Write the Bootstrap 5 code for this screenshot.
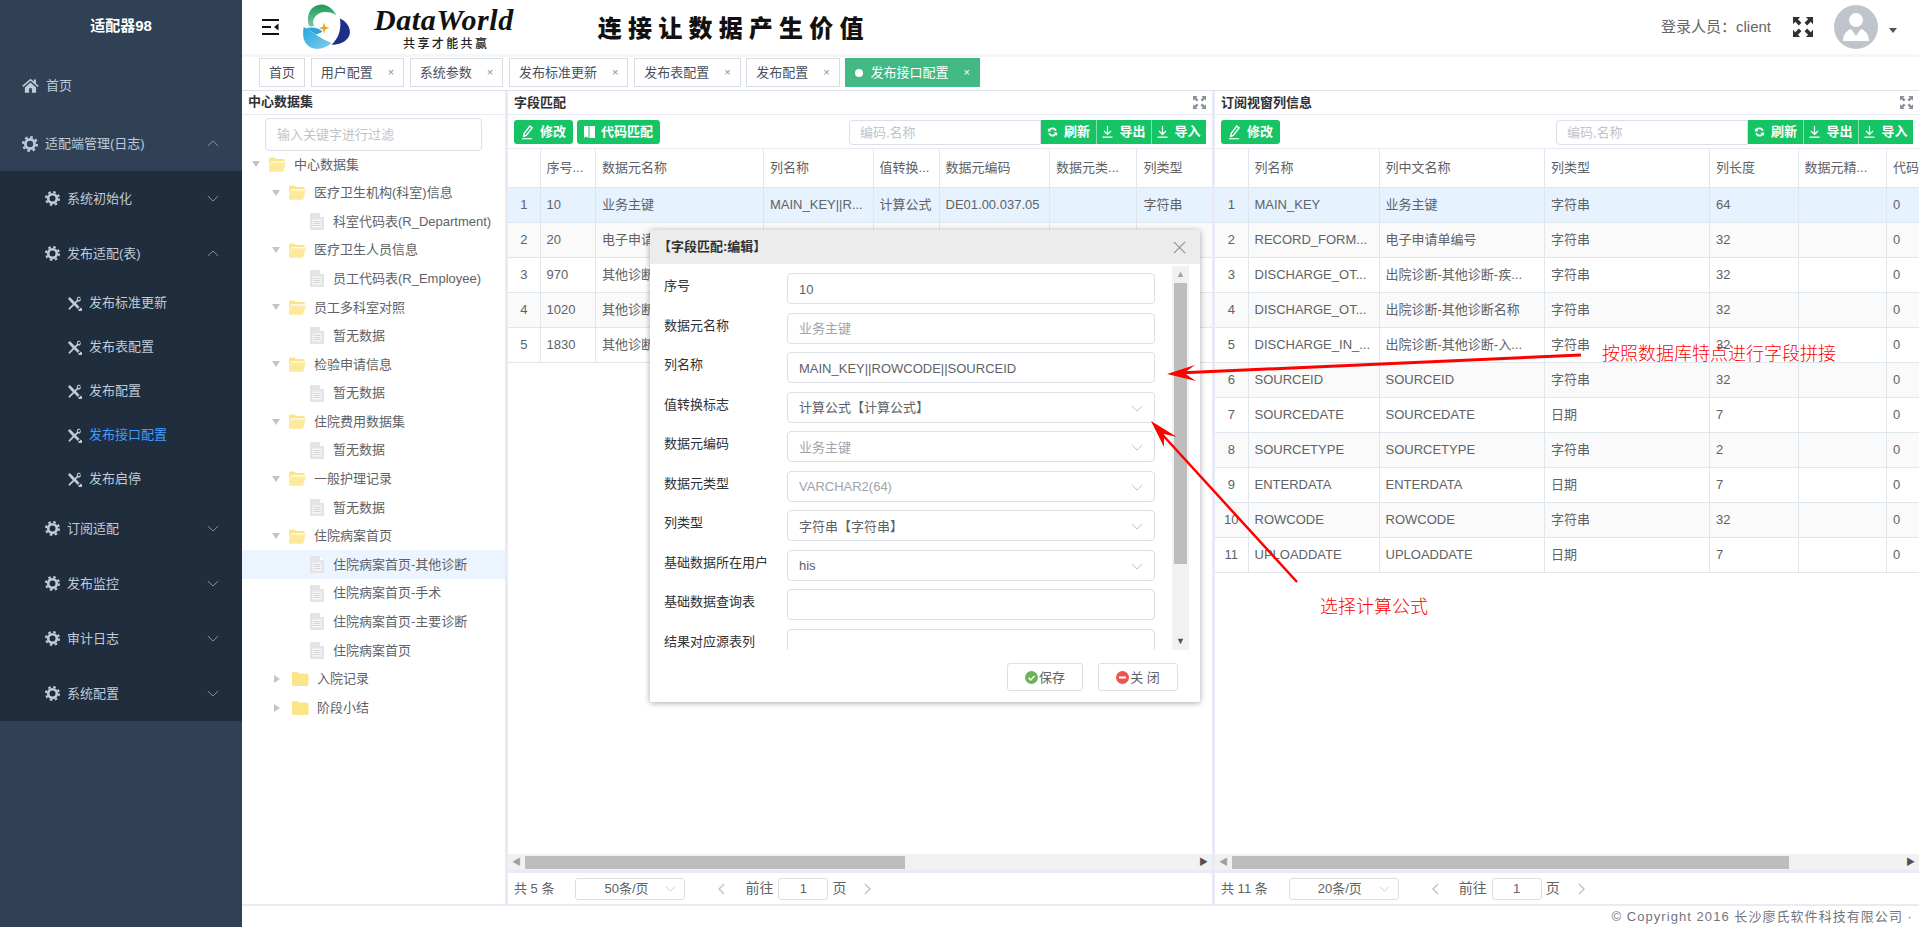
<!DOCTYPE html>
<html lang="zh">
<head>
<meta charset="utf-8">
<title>适配器98</title>
<link rel="stylesheet" href="https://cdn.jsdelivr.net/npm/bootstrap@5.3.0/dist/css/bootstrap.min.css">
<style>
html,body{height:927px;overflow:hidden;margin:0}
body{font-family:"Liberation Sans","Noto Sans CJK SC",sans-serif;font-size:13px;color:#606266;background:#fff;position:relative}
.ico{display:block;flex:none}
.shell{height:927px;width:1919px}
.side{width:242px;flex:none;background:#304156;color:#bfcbd9}
.side-title{height:58px;color:#fff;font-weight:700;font-size:15px;padding-bottom:6px}
.side-item{height:55px;padding-right:23px}
.side-item .gap-label{margin-left:7px}
.lv1{padding-left:22px}
.lv2{padding-left:45px}
.lv3{padding-left:67px;height:44px}
.lv1a{height:58px;padding-top:3px}
.side-sub{background:#1f2d3d}
.side-on{color:#409eff}
.chev{margin-left:auto;color:#8591a2}
.mainbox{width:1677px}
.topbar{height:54px;flex:none;padding:0 22px 0 20px;color:#222}
.brand{font-family:"Liberation Serif",serif;font-style:italic;font-weight:700;font-size:30px;line-height:29px;color:#111;letter-spacing:.6px}
.brand-sub{font-family:"Noto Sans CJK SC",sans-serif;font-size:12px;line-height:13px;letter-spacing:2.4px;color:#222;font-weight:500;margin-top:2px;padding-left:29px}
.slogan{font-family:"Noto Sans CJK SC",sans-serif;font-weight:900;font-size:24px;letter-spacing:6.2px;color:#111;margin-left:84px}
.who{font-size:15px;color:#666;margin-left:auto;margin-right:22px}
.avatar{width:44px;height:44px;border-radius:50%;background:#c0c4cc;margin-left:21px;overflow:hidden}
.ddcaret{width:0;height:0;border:4px solid transparent;border-top:5px solid #555;border-bottom:0;margin-left:11px;margin-top:6px}
.tabbar{height:37px;flex:none;background:#fff;border-top:3px solid #f6f6f6;border-bottom:1px solid #dde1ee;padding:1px 0 0 17px;gap:5.7px;box-shadow:0 1px 0 #eef0f7}
.tabx{height:29px;border:1px solid #d8dce5;color:#495060;padding:0 9px;gap:15px;line-height:1;background:#fff}
.tabx i{font-style:normal;font-size:11px;color:#8a8f99}
.tabx-on{background:#42b983;border-color:#42b983;color:#fff}
.tabx-on i{color:#fff}
.dot{width:8px;height:8px;background:#fff;border-radius:50%;margin-right:-8px}
.work{height:815px;flex:none;background:#e8ebf5;gap:3px;border-bottom:2px solid #e8ebf5}
.pane{background:#fff;min-width:0;height:813px}
.pane-tree{width:263px;flex:none}
.pane-mid{width:704px;flex:none}
.pane-right{width:704px;flex:none}
.pane-title{height:24px;flex:none;border-bottom:1px solid #e8ebf5;font-weight:700;color:#303133;padding:0 6px;line-height:22px}
.pane-tree .pane-title{padding-left:6px}
.tool{height:34px;flex:none;border-bottom:1px solid #e8ebf5;padding:5px 6px 0 6px;align-items:flex-start}
.gbtn{background:#16c466;color:#fff;border:0;border-radius:3px;height:24px;padding:0;font-size:13px;font-weight:700;line-height:24px;gap:6px}
.gbtn:hover{background:#16c466;color:#fff}
.b-edit{width:59px;margin-right:4px}
.b-code{width:83px}
.findbox{width:192px;height:25px;border:1px solid #dcdfe6;border-radius:4px 0 0 4px;margin-left:auto;padding:0 10px;font-size:13px;outline:0;color:#606266}
.findbox::placeholder,.treefind::placeholder{color:#c0c4cc}
.gbtns{height:24px;background:#16c466;border-radius:0 3px 3px 0}
.gbtns .gbtn{border-radius:0;width:55px;border-left:1px solid #7fe0ad}
.gbtns .gbtn:first-child{border-left:0}
.gridbox{flex:1 1 auto;min-height:0;overflow:hidden}
.dtbl.table{table-layout:fixed;margin:0;border-collapse:collapse;font-size:13px}
.mtbl.table{width:770px}
.rtbl.table{width:772px}
.dtbl.table>:not(caption)>*>*{padding:0 6px;border:1px solid #dfe6ec;border-top:0;border-left:0;white-space:nowrap;overflow:hidden;color:#606266;background:#fff;box-shadow:none;vertical-align:middle;height:35px;font-weight:400}
.dtbl.table>thead>tr>th{height:38px}
.dtbl.table>tbody>tr:nth-child(even)>td{background:#fafafa}
.dtbl.table>tbody>tr.hit>td{background:#e6f3ff}
.dtbl.table>:not(caption)>*>*.rn{text-align:center;padding:0}
.cm0{width:32px}.cm1{width:55.5px}.cm2{width:168px}.cm3{width:109.5px}.cm4{width:66px}.cm5{width:110.6px}.cm6{width:87.4px}.cm7{width:141px}
.cr0{width:33px}.cr1{width:131px}.cr2{width:165.5px}.cr3{width:165px}.cr4{width:88.5px}.cr5{width:88.5px}.cr6{width:100px}
.hbar{height:16px;flex:none;background:#f1f1f1;padding:2px 0 1px}
.hbar .arrow-l,.hbar .arrow-r{width:17px;flex:none;color:#a0a0a0;font-size:9px;line-height:13px;text-align:center}
.hbar .arrow-r{color:#505050}
.thumb{background:#bdbdbd;height:13px}
.pagerow{height:34px;flex:none;border-top:3px solid #e8ebf5;padding:0 6px;color:#606266}
.pagesel{width:110px;height:22px;border:1px solid #dcdfe6;border-radius:3px;margin-left:21px;padding:0 8px 0 28px;justify-content:space-between}
.pagego{color:#c0c4cc;font-size:0;margin-left:33px;margin-right:20px}
.pagenum{width:50px;height:22px;border:1px solid #dcdfe6;border-radius:3px;margin:0 4px 0 5px;text-align:center}
.pagenext{color:#c0c4cc;margin-left:18px}
.pglab{font-size:14px}
.treefind{width:217px;height:33px;border:1px solid #dcdfe6;border-radius:4px;margin:3px 0 -1px 23px;padding:0 11px;font-size:13px;outline:0;flex:none;color:#606266}
.treerow{height:28.6px;color:#606266;white-space:nowrap}
.t0{padding-left:10px}.t1{padding-left:30px}.t2{padding-left:68px}
.tcaret{width:0;height:0;border:4.5px solid transparent;border-top:6px solid #c0c4cc;border-bottom:0;margin-right:9px;flex:none}
.tcaret-r{border:4.5px solid transparent;border-left:6px solid #c0c4cc;border-right:0;margin-right:12px;margin-left:2px}
.treerow .tlabel{margin-left:8px}
.t2 .tlabel{margin-left:9px}
.treehit{background:#ecf5ff}
.foot{height:21px;flex:none;padding-right:6px;color:#6f7680;font-size:13px;letter-spacing:1.05px;font-weight:400;background:#fff}
.dlg{position:absolute;left:650px;top:230px;width:550px;height:472px;background:#fff;box-shadow:0 1px 6px rgba(0,0,0,.35);border-radius:2px;z-index:5}
.dlg-head{height:34px;flex:none;background:#ececec;padding:0 14px;font-weight:700;color:#303133}
.dlg-head span{margin-left:-6px}
.dlg-close{margin-left:auto;color:#8f9298}
.dlg-main{height:386px;flex:none;padding-left:14px}
.dlg-form{width:505px;padding-top:9px;overflow:hidden}
.frow{height:39.5px;flex:none}
.flabel{width:123px;flex:none;color:#303133;padding-top:5px;line-height:16px;white-space:nowrap}
.fctl.form-control{width:368px;height:31px;padding:2px 11px 0;font-size:13px;border-color:#dcdfe6;border-radius:4px;color:#606266;box-shadow:none;background:#fff}
.fctl.muted{color:#a0a3a9}
.fctl .chv{color:#c0c4cc;margin-left:auto}
.vbar{width:17px;flex:none;margin-left:3px;background:#f1f1f1;padding:0 2px;height:384px;margin-top:2px}
.vbar .va{height:17px;color:#a0a0a0;font-size:9px;line-height:17px;text-align:center}
.vbar .vb{color:#505050}
.vthumb{background:#bdbdbd;height:281px}
.dlg-foot{flex:1 1 auto;padding:13px 22px 0 0;justify-content:flex-end;gap:15px}
.dbtn{height:28px;border:1px solid #dcdfe6;border-radius:3px;background:#fff;color:#606266;font-size:13px;padding:0;gap:1px;line-height:1}
.dbtn-s{width:76px}.dbtn-c{width:80px}
.marks{position:absolute;left:0;top:0;z-index:6;pointer-events:none}
.redtxt{position:absolute;color:#f00;font-size:18px;line-height:22px;z-index:6;font-family:"Noto Sans CJK SC",sans-serif;font-weight:300;white-space:nowrap}
.rt1{left:1602px;top:341px}
.rt2{left:1320px;top:594px}
.darkico{color:#303133}
.softico{color:#8a8f99}
.softchev{color:#c0c4cc}
</style>
</head>
<body>
<svg width="0" height="0" class="position-absolute">
<defs>
<symbol id="i-gear" viewBox="0 0 16 16"><circle cx="8" cy="8" r="4.6" fill="none" stroke="currentColor" stroke-width="2.8"/><circle cx="8" cy="8" r="6.9" fill="none" stroke="currentColor" stroke-width="2.2" stroke-dasharray="2.7 2.72"/></symbol>
<symbol id="i-tools" viewBox="0 0 16 16"><path d="M1 3 3 1l4.2 4.3 7 7.2a2 2 0 1 1-2 2L5 7.4z" fill="currentColor"/><circle cx="13" cy="13" r="1" fill="#1f2d3d"/><path d="M14.8 1.2c-1.6-.9-3.500-.4-4.200 1-.3.7-.3 1.400 0 2L1.500 13.400l1.100 1.400 9-9c1 .3 2 0 2.700-.8.6-.8.700-1.800.3-2.600L12.800 4.500 11.600 4l-.2-1.300z" fill="currentColor"/></symbol>
<symbol id="i-home" viewBox="0 0 18 16"><path d="M9 .8.2 8.300l1.100 1.200L9 3l7.700 6.500 1.100-1.200-3-2.500V1.500h-2.300v2.300zM3 10v5.600h4.500V11h3v4.600H15V10L9 4.800z" fill="currentColor"/></symbol>
<symbol id="i-up" viewBox="0 0 12 7"><path d="M.8 6 6 1l5.200 5" fill="none" stroke="currentColor" stroke-width="1"/></symbol>
<symbol id="i-down" viewBox="0 0 12 7"><path d="M.8 1 6 6l5.200-5" fill="none" stroke="currentColor" stroke-width="1"/></symbol>
<symbol id="i-folder" viewBox="0 0 17 15"><path d="M0 2.500C0 1.500.6 1 1.500 1h4l1.500 1.500h8c.8 0 1.500.5 1.500 1.500v9.500c0 .8-.6 1.500-1.500 1.500h-13.500C.6 15 0 14.300 0 13.500z" fill="#fce588"/></symbol>
<symbol id="i-folderopen" viewBox="0 0 17 15"><path d="M0 2C0 1 .6.500 1.500.500h4L7 2h7.500c.8 0 1.200.4 1.200 1.200V4H2.500L0 9z" fill="#fce588"/><path d="M2.900 4.800H17l-2.500 8.700c-.2.800-.8 1.300-1.500 1.300H1.200C.5 14.800 0 14.300 0 13.500V10z" fill="#fde99a"/><path d="M3.800 5.800h12" stroke="#fff" stroke-width=".9" stroke-dasharray="1 .6"/></symbol>
<symbol id="i-file" viewBox="0 0 14 17"><path d="M0 1C0 .4.400 0 1 0h9l4 4v12c0 .6-.4 1-1 1H1c-.6 0-1-.4-1-1z" fill="#e3e4e6"/><path d="M10 0v4h4z" fill="#fff"/><path d="M2.500 6.500h9v8h-9z" fill="#f7f7f8"/><path d="M3.500 8.500h7M3.500 10.500h7M3.500 12.500h7" stroke="#c9cacd" stroke-width=".8"/></symbol>
<symbol id="i-expand" viewBox="0 0 14 14"><path d="M0 0h5L3.400 1.600 5.900 4.100 4.100 5.900 1.600 3.400 0 5zM14 0v5l-1.600-1.600-2.500 2.500-1.800-1.800 2.500-2.500L9 0zM0 14V9l1.600 1.600 2.500-2.500 1.800 1.800-2.500 2.500L5 14zM14 14H9l1.600-1.600-2.500-2.500 1.800-1.800 2.500 2.500L14 9z" fill="currentColor"/></symbol>
<symbol id="i-pen" viewBox="0 0 14 16"><path d="M9.500 1 12 3 5.600 11.200 3 12.300l.2-2.900z" fill="none" stroke="currentColor" stroke-width="1.500"/><path d="M1 14.700h11" stroke="currentColor" stroke-width="1.200"/></symbol>
<symbol id="i-book" viewBox="0 0 11 13"><path d="M0 0h4.500v12l-2.200-1.500L0 12zM5.500 0H11v12H5.500z" fill="currentColor"/></symbol>
<symbol id="i-refresh" viewBox="0 0 12 13"><path d="M10.500 4.800A5 5 0 0 0 2 3.400L1 2v4h4L3.400 4.800a3.200 3.200 0 0 1 5.400.6zM1.500 8.200A5 5 0 0 0 10 9.600l1 1.400V7H7l1.600 1.200a3.200 3.200 0 0 1-5.400-.6z" fill="currentColor"/></symbol>
<symbol id="i-dl" viewBox="0 0 11 12"><path d="M5.500 0v7.800M2 5l3.500 3.500L9 5M.5 11.200h10" fill="none" stroke="currentColor" stroke-width="1.200"/></symbol>
<symbol id="i-x" viewBox="0 0 14 14"><path d="M1 1l12 12M13 1 1 13" fill="none" stroke="currentColor" stroke-width="1.300"/></symbol>
</defs>
</svg>

<div class="shell d-flex">
  <aside class="side d-flex flex-column">
    <div class="side-title d-flex align-items-center justify-content-center">适配器98</div>
    <div class="side-item lv1 d-flex align-items-center"><svg class="ico" width="17" height="15"><use href="#i-home"/></svg><span class="gap-label">首页</span></div>
    <div class="side-item lv1 lv1a d-flex align-items-center"><svg class="ico" width="16" height="16"><use href="#i-gear"/></svg><span class="gap-label">适配端管理(日志)</span><svg class="ico chev" width="12" height="7"><use href="#i-up"/></svg></div>
    <div class="side-sub d-flex flex-column">
      <div class="side-item lv2 d-flex align-items-center"><svg class="ico" width="15" height="15"><use href="#i-gear"/></svg><span class="gap-label">系统初始化</span><svg class="ico chev" width="12" height="7"><use href="#i-down"/></svg></div>
      <div class="side-item lv2 d-flex align-items-center"><svg class="ico" width="15" height="15"><use href="#i-gear"/></svg><span class="gap-label">发布适配(表)</span><svg class="ico chev" width="12" height="7"><use href="#i-up"/></svg></div>
      <div class="side-item lv3 d-flex align-items-center"><svg class="ico" width="15" height="15"><use href="#i-tools"/></svg><span class="gap-label">发布标准更新</span></div>
      <div class="side-item lv3 d-flex align-items-center"><svg class="ico" width="15" height="15"><use href="#i-tools"/></svg><span class="gap-label">发布表配置</span></div>
      <div class="side-item lv3 d-flex align-items-center"><svg class="ico" width="15" height="15"><use href="#i-tools"/></svg><span class="gap-label">发布配置</span></div>
      <div class="side-item lv3 d-flex align-items-center"><svg class="ico" width="15" height="15"><use href="#i-tools"/></svg><span class="gap-label side-on">发布接口配置</span></div>
      <div class="side-item lv3 d-flex align-items-center"><svg class="ico" width="15" height="15"><use href="#i-tools"/></svg><span class="gap-label">发布启停</span></div>
      <div class="side-item lv2 d-flex align-items-center"><svg class="ico" width="15" height="15"><use href="#i-gear"/></svg><span class="gap-label">订阅适配</span><svg class="ico chev" width="12" height="7"><use href="#i-down"/></svg></div>
      <div class="side-item lv2 d-flex align-items-center"><svg class="ico" width="15" height="15"><use href="#i-gear"/></svg><span class="gap-label">发布监控</span><svg class="ico chev" width="12" height="7"><use href="#i-down"/></svg></div>
      <div class="side-item lv2 d-flex align-items-center"><svg class="ico" width="15" height="15"><use href="#i-gear"/></svg><span class="gap-label">审计日志</span><svg class="ico chev" width="12" height="7"><use href="#i-down"/></svg></div>
      <div class="side-item lv2 d-flex align-items-center"><svg class="ico" width="15" height="15"><use href="#i-gear"/></svg><span class="gap-label">系统配置</span><svg class="ico chev" width="12" height="7"><use href="#i-down"/></svg></div>
    </div>
  </aside>

  <div class="mainbox d-flex flex-column">
    <header class="topbar d-flex align-items-center">
      <svg class="ico" width="17" height="16" viewBox="0 0 17 16"><path d="M0 1h17M0 8h9M0 15h17" stroke="#111" stroke-width="2"/><path d="M16.500 4.500v7L12 8z" fill="#111"/></svg>
      <svg class="ico ms-4" width="47" height="46" viewBox="195 8 140 134">
        <defs>
          <linearGradient id="lgG" x1="0" y1="0" x2="0" y2="1"><stop offset="0" stop-color="#1d9a5b"/><stop offset="1" stop-color="#7ec8a0"/></linearGradient>
          <linearGradient id="lgB" x1="0" y1="0" x2="1" y2="1"><stop offset="0" stop-color="#27a5df"/><stop offset="1" stop-color="#7fd0ee"/></linearGradient>
        </defs>
        <path d="M213 72C203 38 218 10 250 8c20 0 35 15 45 32-24-14-52-13-65 6-6 9-7 17-2 25-5 3-11 3-15 1z" fill="url(#lgG)"/>
        <path d="M197 75c18 8 40 30 83 48-20 18-55 27-75 3-11-15-11-33-8-51z" fill="url(#lgB)"/>
        <path d="M205 78c20-4 38 0 48 10-5 5-12 8-20 9-10-6-20-12-28-19z" fill="#2ba6de"/>
        <path d="M305 50c20 8 35 30 28 50-8 20-33 28-53 28 20-18 30-43 25-78z" fill="#1f2f86"/>
        <path d="M258 62l4 12 12 4-12 4-4 12-4-12-12-4 12-4z" fill="#f2a31d"/>
      </svg>
      <div class="ms-4">
        <div class="brand">DataWorld</div>
        <div class="brand-sub">共享才能共赢</div>
      </div>
      <div class="slogan">连接让数据产生价值</div>
      <div class="who">登录人员：client</div>
      <svg class="ico darkico" width="20" height="20"><use href="#i-expand"/></svg>
      <div class="avatar d-flex align-items-end justify-content-center">
        <svg class="ico" width="44" height="44" viewBox="0 0 44 44"><circle cx="22" cy="15" r="7" fill="#fff"/><path d="M9 36c0-6 3-10 8-12l5 7 5-7c5 2 8 6 8 12z" fill="#fff"/></svg>
      </div>
      <div class="ddcaret"></div>
    </header>
    <nav class="tabbar d-flex align-items-start">
      <div class="tabx d-flex align-items-center">首页</div>
      <div class="tabx d-flex align-items-center">用户配置<i>×</i></div>
      <div class="tabx d-flex align-items-center">系统参数<i>×</i></div>
      <div class="tabx d-flex align-items-center">发布标准更新<i>×</i></div>
      <div class="tabx d-flex align-items-center">发布表配置<i>×</i></div>
      <div class="tabx d-flex align-items-center">发布配置<i>×</i></div>
      <div class="tabx tabx-on d-flex align-items-center"><span class="dot"></span>发布接口配置<i>×</i></div>
    </nav>

    <div class="work d-flex">
      <section class="pane pane-tree d-flex flex-column">
        <div class="pane-title">中心数据集</div>
        <input class="treefind" placeholder="输入关键字进行过滤">
        <div class="d-flex flex-column">
          <div class="treerow t0 d-flex align-items-center"><span class="tcaret"></span><svg class="ico" width="17" height="15"><use href="#i-folderopen"/></svg><span class="tlabel">中心数据集</span></div>
          <div class="treerow t1 d-flex align-items-center"><span class="tcaret"></span><svg class="ico" width="17" height="15"><use href="#i-folderopen"/></svg><span class="tlabel">医疗卫生机构(科室)信息</span></div>
          <div class="treerow t2 d-flex align-items-center"><svg class="ico" width="14" height="17"><use href="#i-file"/></svg><span class="tlabel">科室代码表(R_Department)</span></div>
          <div class="treerow t1 d-flex align-items-center"><span class="tcaret"></span><svg class="ico" width="17" height="15"><use href="#i-folderopen"/></svg><span class="tlabel">医疗卫生人员信息</span></div>
          <div class="treerow t2 d-flex align-items-center"><svg class="ico" width="14" height="17"><use href="#i-file"/></svg><span class="tlabel">员工代码表(R_Employee)</span></div>
          <div class="treerow t1 d-flex align-items-center"><span class="tcaret"></span><svg class="ico" width="17" height="15"><use href="#i-folderopen"/></svg><span class="tlabel">员工多科室对照</span></div>
          <div class="treerow t2 d-flex align-items-center"><svg class="ico" width="14" height="17"><use href="#i-file"/></svg><span class="tlabel">暂无数据</span></div>
          <div class="treerow t1 d-flex align-items-center"><span class="tcaret"></span><svg class="ico" width="17" height="15"><use href="#i-folderopen"/></svg><span class="tlabel">检验申请信息</span></div>
          <div class="treerow t2 d-flex align-items-center"><svg class="ico" width="14" height="17"><use href="#i-file"/></svg><span class="tlabel">暂无数据</span></div>
          <div class="treerow t1 d-flex align-items-center"><span class="tcaret"></span><svg class="ico" width="17" height="15"><use href="#i-folderopen"/></svg><span class="tlabel">住院费用数据集</span></div>
          <div class="treerow t2 d-flex align-items-center"><svg class="ico" width="14" height="17"><use href="#i-file"/></svg><span class="tlabel">暂无数据</span></div>
          <div class="treerow t1 d-flex align-items-center"><span class="tcaret"></span><svg class="ico" width="17" height="15"><use href="#i-folderopen"/></svg><span class="tlabel">一般护理记录</span></div>
          <div class="treerow t2 d-flex align-items-center"><svg class="ico" width="14" height="17"><use href="#i-file"/></svg><span class="tlabel">暂无数据</span></div>
          <div class="treerow t1 d-flex align-items-center"><span class="tcaret"></span><svg class="ico" width="17" height="15"><use href="#i-folderopen"/></svg><span class="tlabel">住院病案首页</span></div>
          <div class="treerow t2 treehit d-flex align-items-center"><svg class="ico" width="14" height="17"><use href="#i-file"/></svg><span class="tlabel">住院病案首页-其他诊断</span></div>
          <div class="treerow t2 d-flex align-items-center"><svg class="ico" width="14" height="17"><use href="#i-file"/></svg><span class="tlabel">住院病案首页-手术</span></div>
          <div class="treerow t2 d-flex align-items-center"><svg class="ico" width="14" height="17"><use href="#i-file"/></svg><span class="tlabel">住院病案首页-主要诊断</span></div>
          <div class="treerow t2 d-flex align-items-center"><svg class="ico" width="14" height="17"><use href="#i-file"/></svg><span class="tlabel">住院病案首页</span></div>
          <div class="treerow t1 d-flex align-items-center"><span class="tcaret tcaret-r"></span><svg class="ico" width="17" height="15"><use href="#i-folder"/></svg><span class="tlabel">入院记录</span></div>
          <div class="treerow t1 d-flex align-items-center"><span class="tcaret tcaret-r"></span><svg class="ico" width="17" height="15"><use href="#i-folder"/></svg><span class="tlabel">阶段小结</span></div>
        </div>
      </section>

      <section class="pane pane-mid d-flex flex-column">
        <div class="pane-title d-flex justify-content-between align-items-center"><span>字段匹配</span><svg class="ico softico" width="13" height="13"><use href="#i-expand"/></svg></div>
        <div class="tool d-flex">
          <button class="btn gbtn b-edit d-flex align-items-center justify-content-center"><svg class="ico" width="13" height="15"><use href="#i-pen"/></svg>修改</button>
          <button class="btn gbtn b-code d-flex align-items-center justify-content-center"><svg class="ico" width="11" height="13"><use href="#i-book"/></svg>代码匹配</button>
          <input class="findbox" placeholder="编码,名称">
          <div class="gbtns d-flex">
            <button class="btn gbtn d-flex align-items-center justify-content-center"><svg class="ico" width="11" height="12"><use href="#i-refresh"/></svg>刷新</button>
            <button class="btn gbtn d-flex align-items-center justify-content-center"><svg class="ico" width="11" height="12"><use href="#i-dl"/></svg>导出</button>
            <button class="btn gbtn d-flex align-items-center justify-content-center"><svg class="ico" width="11" height="12"><use href="#i-dl"/></svg>导入</button>
          </div>
        </div>
        <div class="gridbox">
          <table class="table dtbl mtbl">
            <colgroup><col class="cm0"><col class="cm1"><col class="cm2"><col class="cm3"><col class="cm4"><col class="cm5"><col class="cm6"><col class="cm7"></colgroup>
            <thead><tr><th></th><th>序号...</th><th>数据元名称</th><th>列名称</th><th>值转换...</th><th>数据元编码</th><th>数据元类...</th><th>列类型</th></tr></thead>
            <tbody>
              <tr class="hit"><td class="rn">1</td><td>10</td><td>业务主键</td><td>MAIN_KEY||R...</td><td>计算公式</td><td>DE01.00.037.05</td><td></td><td>字符串</td></tr>
              <tr><td class="rn">2</td><td>20</td><td>电子申请单编号</td><td></td><td></td><td></td><td></td><td></td></tr>
              <tr><td class="rn">3</td><td>970</td><td>其他诊断编码</td><td></td><td></td><td></td><td></td><td></td></tr>
              <tr><td class="rn">4</td><td>1020</td><td>其他诊断名称</td><td></td><td></td><td></td><td></td><td></td></tr>
              <tr><td class="rn">5</td><td>1830</td><td>其他诊断入院</td><td></td><td></td><td></td><td></td><td></td></tr>
            </tbody>
          </table>
        </div>
        <div class="hbar d-flex"><span class="arrow-l">◀</span><div class="thumb" style="width:380px"></div><span class="arrow-r ms-auto">▶</span></div>
        <div class="pagerow d-flex align-items-center">
          <span>共 5 条</span>
          <div class="pagesel d-flex align-items-center"><span>50条/页</span><svg class="ico softchev" width="11" height="6"><use href="#i-down"/></svg></div>
          <svg class="ico pagego" width="7" height="12" viewBox="0 0 7 12"><path d="M6 1 1 6l5 5" fill="none" stroke="currentColor" stroke-width="1.500"/></svg>
          <span class="pglab">前往</span><span class="pagenum d-flex align-items-center justify-content-center">1</span><span class="pglab">页</span>
          <svg class="ico pagenext" width="7" height="12" viewBox="0 0 7 12"><path d="m1 1 5 5-5 5" fill="none" stroke="currentColor" stroke-width="1.500"/></svg>
        </div>
      </section>

      <section class="pane pane-right d-flex flex-column">
        <div class="pane-title d-flex justify-content-between align-items-center"><span>订阅视窗列信息</span><svg class="ico softico" width="13" height="13"><use href="#i-expand"/></svg></div>
        <div class="tool d-flex">
          <button class="btn gbtn b-edit d-flex align-items-center justify-content-center"><svg class="ico" width="13" height="15"><use href="#i-pen"/></svg>修改</button>
          <input class="findbox" placeholder="编码,名称">
          <div class="gbtns d-flex">
            <button class="btn gbtn d-flex align-items-center justify-content-center"><svg class="ico" width="11" height="12"><use href="#i-refresh"/></svg>刷新</button>
            <button class="btn gbtn d-flex align-items-center justify-content-center"><svg class="ico" width="11" height="12"><use href="#i-dl"/></svg>导出</button>
            <button class="btn gbtn d-flex align-items-center justify-content-center"><svg class="ico" width="11" height="12"><use href="#i-dl"/></svg>导入</button>
          </div>
        </div>
        <div class="gridbox">
          <table class="table dtbl rtbl">
            <colgroup><col class="cr0"><col class="cr1"><col class="cr2"><col class="cr3"><col class="cr4"><col class="cr5"><col class="cr6"></colgroup>
            <thead><tr><th></th><th>列名称</th><th>列中文名称</th><th>列类型</th><th>列长度</th><th>数据元精...</th><th>代码</th></tr></thead>
            <tbody>
              <tr class="hit"><td class="rn">1</td><td>MAIN_KEY</td><td>业务主键</td><td>字符串</td><td>64</td><td></td><td>0</td></tr>
              <tr><td class="rn">2</td><td>RECORD_FORM...</td><td>电子申请单编号</td><td>字符串</td><td>32</td><td></td><td>0</td></tr>
              <tr><td class="rn">3</td><td>DISCHARGE_OT...</td><td>出院诊断-其他诊断-疾...</td><td>字符串</td><td>32</td><td></td><td>0</td></tr>
              <tr><td class="rn">4</td><td>DISCHARGE_OT...</td><td>出院诊断-其他诊断名称</td><td>字符串</td><td>32</td><td></td><td>0</td></tr>
              <tr><td class="rn">5</td><td>DISCHARGE_IN_...</td><td>出院诊断-其他诊断-入...</td><td>字符串</td><td>32</td><td></td><td>0</td></tr>
              <tr><td class="rn">6</td><td>SOURCEID</td><td>SOURCEID</td><td>字符串</td><td>32</td><td></td><td>0</td></tr>
              <tr><td class="rn">7</td><td>SOURCEDATE</td><td>SOURCEDATE</td><td>日期</td><td>7</td><td></td><td>0</td></tr>
              <tr><td class="rn">8</td><td>SOURCETYPE</td><td>SOURCETYPE</td><td>字符串</td><td>2</td><td></td><td>0</td></tr>
              <tr><td class="rn">9</td><td>ENTERDATA</td><td>ENTERDATA</td><td>日期</td><td>7</td><td></td><td>0</td></tr>
              <tr><td class="rn">10</td><td>ROWCODE</td><td>ROWCODE</td><td>字符串</td><td>32</td><td></td><td>0</td></tr>
              <tr><td class="rn">11</td><td>UPLOADDATE</td><td>UPLOADDATE</td><td>日期</td><td>7</td><td></td><td>0</td></tr>
            </tbody>
          </table>
        </div>
        <div class="hbar d-flex"><span class="arrow-l">◀</span><div class="thumb" style="width:557px"></div><span class="arrow-r ms-auto">▶</span></div>
        <div class="pagerow d-flex align-items-center">
          <span>共 11 条</span>
          <div class="pagesel d-flex align-items-center"><span>20条/页</span><svg class="ico softchev" width="11" height="6"><use href="#i-down"/></svg></div>
          <svg class="ico pagego" width="7" height="12" viewBox="0 0 7 12"><path d="M6 1 1 6l5 5" fill="none" stroke="currentColor" stroke-width="1.500"/></svg>
          <span class="pglab">前往</span><span class="pagenum d-flex align-items-center justify-content-center">1</span><span class="pglab">页</span>
          <svg class="ico pagenext" width="7" height="12" viewBox="0 0 7 12"><path d="m1 1 5 5-5 5" fill="none" stroke="currentColor" stroke-width="1.500"/></svg>
        </div>
      </section>
    </div>
    <footer class="foot d-flex align-items-center justify-content-end">© Copyright 2016 长沙廖氏软件科技有限公司 ·</footer>
  </div>
</div>

<div class="dlg d-flex flex-column">
  <div class="dlg-head d-flex align-items-center"><span>【字段匹配:编辑】</span><svg class="ico dlg-close" width="13" height="13"><use href="#i-x"/></svg></div>
  <div class="dlg-main d-flex">
    <div class="dlg-form d-flex flex-column">
      <div class="frow d-flex"><div class="flabel">序号</div><div class="fctl form-control d-flex align-items-center">10</div></div>
      <div class="frow d-flex"><div class="flabel">数据元名称</div><div class="fctl form-control muted d-flex align-items-center">业务主键</div></div>
      <div class="frow d-flex"><div class="flabel">列名称</div><div class="fctl form-control d-flex align-items-center">MAIN_KEY||ROWCODE||SOURCEID</div></div>
      <div class="frow d-flex"><div class="flabel">值转换标志</div><div class="fctl form-control d-flex align-items-center">计算公式【计算公式】<svg class="ico chv" width="12" height="7"><use href="#i-down"/></svg></div></div>
      <div class="frow d-flex"><div class="flabel">数据元编码</div><div class="fctl form-control muted d-flex align-items-center">业务主键<svg class="ico chv" width="12" height="7"><use href="#i-down"/></svg></div></div>
      <div class="frow d-flex"><div class="flabel">数据元类型</div><div class="fctl form-control muted d-flex align-items-center">VARCHAR2(64)<svg class="ico chv" width="12" height="7"><use href="#i-down"/></svg></div></div>
      <div class="frow d-flex"><div class="flabel">列类型</div><div class="fctl form-control d-flex align-items-center">字符串【字符串】<svg class="ico chv" width="12" height="7"><use href="#i-down"/></svg></div></div>
      <div class="frow d-flex"><div class="flabel">基础数据所在用户</div><div class="fctl form-control d-flex align-items-center">his<svg class="ico chv" width="12" height="7"><use href="#i-down"/></svg></div></div>
      <div class="frow d-flex"><div class="flabel">基础数据查询表</div><div class="fctl form-control"></div></div>
      <div class="frow d-flex"><div class="flabel">结果对应源表列</div><div class="fctl form-control"></div></div>
    </div>
    <div class="vbar d-flex flex-column">
      <div class="va">▲</div><div class="vthumb"></div><div class="va vb mt-auto">▼</div>
    </div>
  </div>
  <div class="dlg-foot d-flex">
    <button class="btn dbtn dbtn-s d-flex align-items-center justify-content-center"><svg class="ico" width="13" height="13" viewBox="0 0 13 13"><circle cx="6.500" cy="6.500" r="6.500" fill="#6cb257"/><path d="m3.500 6.700 2.200 2.200 3.800-4" fill="none" stroke="#fff" stroke-width="1.500"/></svg>保存</button>
    <button class="btn dbtn dbtn-c d-flex align-items-center justify-content-center"><svg class="ico" width="13" height="13" viewBox="0 0 13 13"><circle cx="6.500" cy="6.500" r="6.500" fill="#e9574e"/><path d="M3 6.500h7" stroke="#fff" stroke-width="2"/></svg>关 闭</button>
  </div>
</div>

<svg class="marks" width="1919" height="927" viewBox="0 0 1919 927">
  <path d="M1581 355 1178 373" stroke="#f00" stroke-width="3" fill="none"/>
  <path d="M1167 374 1195 365 1184 373 1196 381z" fill="#f00"/>
  <path d="M1297 582 1160 432" stroke="#f00" stroke-width="2.500" fill="none"/>
  <path d="M1151 421 1177 437 1164 434 1164 447z" fill="#f00"/>
</svg>
<span class="redtxt rt1">按照数据库特点进行字段拼接</span>
<span class="redtxt rt2">选择计算公式</span>
</body>
</html>
